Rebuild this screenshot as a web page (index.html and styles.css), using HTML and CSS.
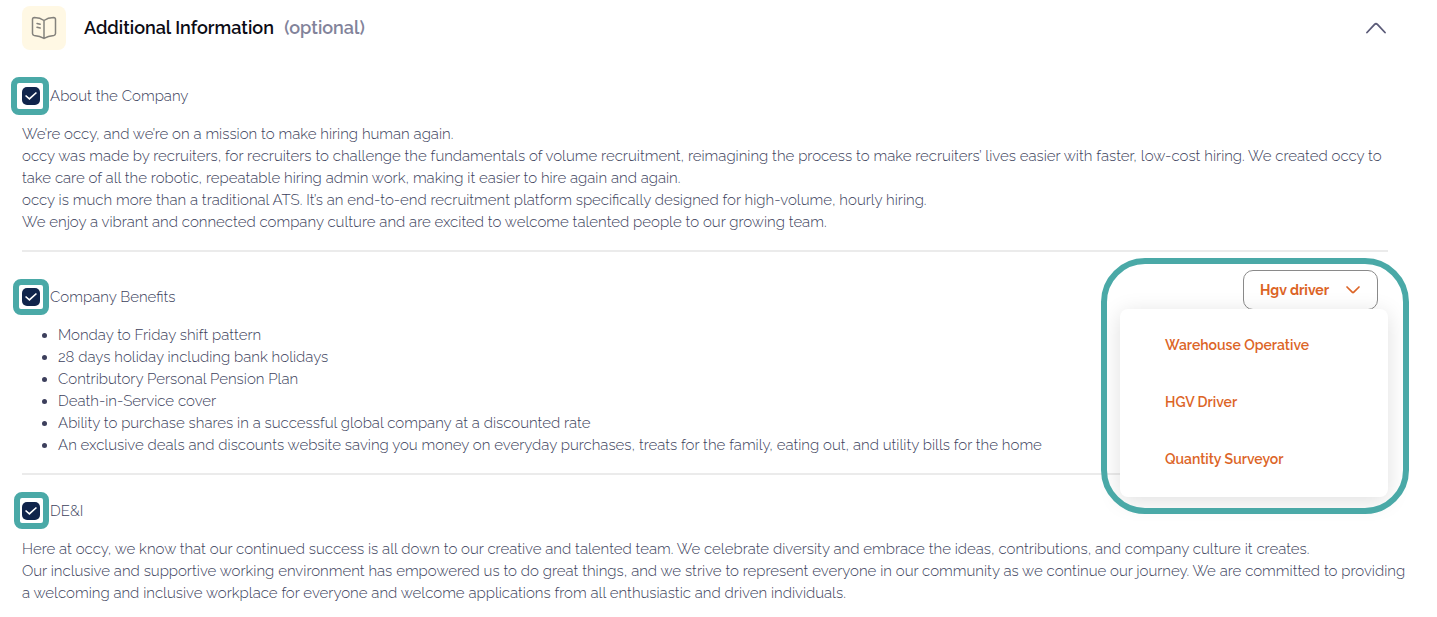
FILE: index.html
```html
<!DOCTYPE html>
<html lang="en">
<head>
<meta charset="utf-8">
<meta name="viewport" content="width=device-width, initial-scale=1">
<title>Additional Information</title>
<link rel="stylesheet" href="styles.css">
</head>
<body>
<main class="panel">
  <header class="panel-header">
    <span class="panel-icon">
      <svg width="26" height="24" viewBox="0 0 26 24" fill="none" stroke="#84827c" stroke-width="1.5" stroke-linecap="round" stroke-linejoin="round" aria-hidden="true">
        <path d="M13 4.5C10.5 2.7 7 1.7 3.4 1.6Q1.5 1.6 1.5 3.4V17.5Q1.5 19.2 3.2 19.4C7 19.7 10.5 20.8 13 22.4C15.500 20.800 19 19.700 22.800 19.400Q24.500 19.200 24.500 17.500V3.400Q24.500 1.600 22.600 1.600C19 1.700 15.500 2.700 13 4.500V22.400"/>
        <path d="M6 7.500L9.200 8.200M6 11.300L9.200 12"/>
      </svg>
    </span>
    <h1 class="panel-title">Additional Information <span class="optional">(optional)</span></h1>
    <button class="collapse" type="button" aria-label="Collapse section">
      <svg width="22" height="12" viewBox="0 0 22 12" fill="none" stroke="#5b5b78" stroke-width="1.8" stroke-linecap="round" stroke-linejoin="round" aria-hidden="true"><path d="M2 10.500L9.600 2.400Q11 1.100 12.400 2.400L20 10.500"/></svg>
    </button>
  </header>

  <section class="block block-about">
    <div class="block-head">
      <div class="check">
        <input class="check-input" type="checkbox" id="about" checked>
        <label for="about">About the Company</label>
        <span class="marker marker-about"></span>
      </div>
    </div>
    <div class="copy">
      <p>We’re occy, and we’re on a mission to make hiring human again.</p>
      <p>occy was made by recruiters, for recruiters to challenge the fundamentals of volume recruitment, reimagining the process to make recruiters’ lives easier with faster, low-cost hiring. We created occy to take care of all the robotic, repeatable hiring admin work, making it easier to hire again and again.</p>
      <p>occy is much more than a traditional ATS. It’s an end-to-end recruitment platform specifically designed for high-volume, hourly hiring.</p>
      <p>We enjoy a vibrant and connected company culture and are excited to welcome talented people to our growing team.</p>
    </div>
  </section>

  <section class="block block-benefits">
    <div class="block-head">
      <div class="check">
        <input class="check-input" type="checkbox" id="benefits" checked>
        <label for="benefits">Company Benefits</label>
        <span class="marker marker-benefits"></span>
      </div>
      <div class="dropdown">
        <button class="dropdown-toggle" type="button" aria-haspopup="menu" aria-expanded="true">Hgv driver
          <svg width="16" height="10" viewBox="0 0 16 10" fill="none" stroke="#dc6426" stroke-width="1.700" stroke-linecap="round" stroke-linejoin="round" aria-hidden="true"><path d="M2 2L7.200 7.200Q8 8 8.800 7.200L14 2"/></svg>
        </button>
        <div class="menu" role="menu">
          <button class="menu-item" type="button" role="menuitem">Warehouse Operative</button>
          <button class="menu-item" type="button" role="menuitem">HGV Driver</button>
          <button class="menu-item" type="button" role="menuitem">Quantity Surveyor</button>
        </div>
        <span class="menu-marker"></span>
      </div>
    </div>
    <ul class="copy benefits">
      <li>Monday to Friday shift pattern</li>
      <li>28 days holiday including bank holidays</li>
      <li>Contributory Personal Pension Plan</li>
      <li>Death-in-Service cover</li>
      <li>Ability to purchase shares in a successful global company at a discounted rate</li>
      <li>An exclusive deals and discounts website saving you money on everyday purchases, treats for the family, eating out, and utility bills for the home</li>
    </ul>
  </section>

  <section class="block block-dei">
    <div class="block-head">
      <div class="check">
        <input class="check-input" type="checkbox" id="dei" checked>
        <label for="dei">DE&amp;I</label>
        <span class="marker marker-dei"></span>
      </div>
    </div>
    <div class="copy">
      <p>Here at occy, we know that our continued success is all down to our creative and talented team. We celebrate diversity and embrace the ideas, contributions, and company culture it creates.</p>
      <p>Our inclusive and supportive working environment has empowered us to do great things, and we strive to represent everyone in our community as we continue our journey. We are committed to providing a welcoming and inclusive workplace for everyone and welcome applications from all enthusiastic and driven individuals.</p>
    </div>
  </section>
</main>
</body>
</html>
```
FILE: styles.css
```css
* { box-sizing: border-box; }

body {
  margin: 0;
  background: #fff;
  color: #3c3f5c;
  font: 300 15px/22px Raleway, Lato, sans-serif;
}

button {
  font: inherit;
  color: inherit;
  background: none;
  border: 0;
  padding: 0;
  cursor: pointer;
}

.panel { padding: 6px 49px 12px 22px; }

.panel-header {
  display: flex;
  align-items: center;
  gap: 18px;
}

.panel-icon {
  display: grid;
  place-items: center;
  width: 44px;
  height: 44px;
  border-radius: 8px;
  background: #fff8e4;
}

.panel-title {
  flex: 1;
  margin: 0;
  color: #0b0b14;
  font-size: 18px;
  font-weight: 600;
  line-height: 24px;
}

.optional {
  margin-left: 6px;
  color: #82839a;
}

.collapse {
  display: flex;
  padding: 4px 1px;
}

.block {
  padding: 18px 0 17px;
  border-bottom: 2px solid #ebebeb;
}

.block-about { padding-top: 33px; }

.block-dei {
  padding-top: 23px;
  border-bottom: 0;
}

.block-head {
  display: flex;
  align-items: flex-end;
  justify-content: space-between;
  margin-bottom: 14px;
}

.check {
  position: relative;
  display: flex;
  align-items: center;
  gap: 10px;
  line-height: 26px;
}

.check-input {
  appearance: none;
  width: 18px;
  height: 18px;
  margin: 0;
  border-radius: 5px;
  background: #10244b;
  display: grid;
  place-items: center;
}

.check-input:checked::before {
  content: "";
  width: 12px;
  height: 8px;
  background: #fff;
  clip-path: polygon(0 50%, 9% 37%, 36% 72%, 91% 0, 100% 12%, 37% 100%);
}

.marker {
  position: absolute;
  border: 6px solid #4aa9a7;
  border-radius: 8px;
  pointer-events: none;
}

.marker-about { inset: -6px auto auto -11px; width: 38px; height: 38px; }
.marker-benefits { inset: -5px auto auto -9px; width: 36px; height: 36px; }
.marker-dei { inset: -6px auto auto -8px; width: 35px; height: 37px; }

.copy { margin: 0 -20px 0 0; }
.copy p { margin: 0; }

.benefits {
  padding-left: 36px;
}

.dropdown {
  position: relative;
  margin-right: 10px;
  color: #dc6426;
  font-size: 14px;
  font-weight: 600;
}

.dropdown-toggle {
  display: flex;
  align-items: center;
  justify-content: space-between;
  width: 135px;
  height: 40px;
  padding: 0 16px;
  border: 1px solid #8a8a8a;
  border-radius: 10px;
  font-weight: 700;
}

.menu {
  position: absolute;
  top: 39px;
  right: -10px;
  z-index: 2;
  display: grid;
  gap: 35px;
  width: 268px;
  padding: 25px 45px 27px;
  border-radius: 8px;
  background: #fff;
  box-shadow: 0 4px 22px rgba(0, 0, 0, 0.13);
}

.menu-item { text-align: left; }

.menu-marker {
  position: absolute;
  z-index: 3;
  inset: -12px -31px auto auto;
  width: 308px;
  height: 256px;
  border: 6px solid #4aa9a7;
  border-radius: 44px;
  pointer-events: none;
}
```
